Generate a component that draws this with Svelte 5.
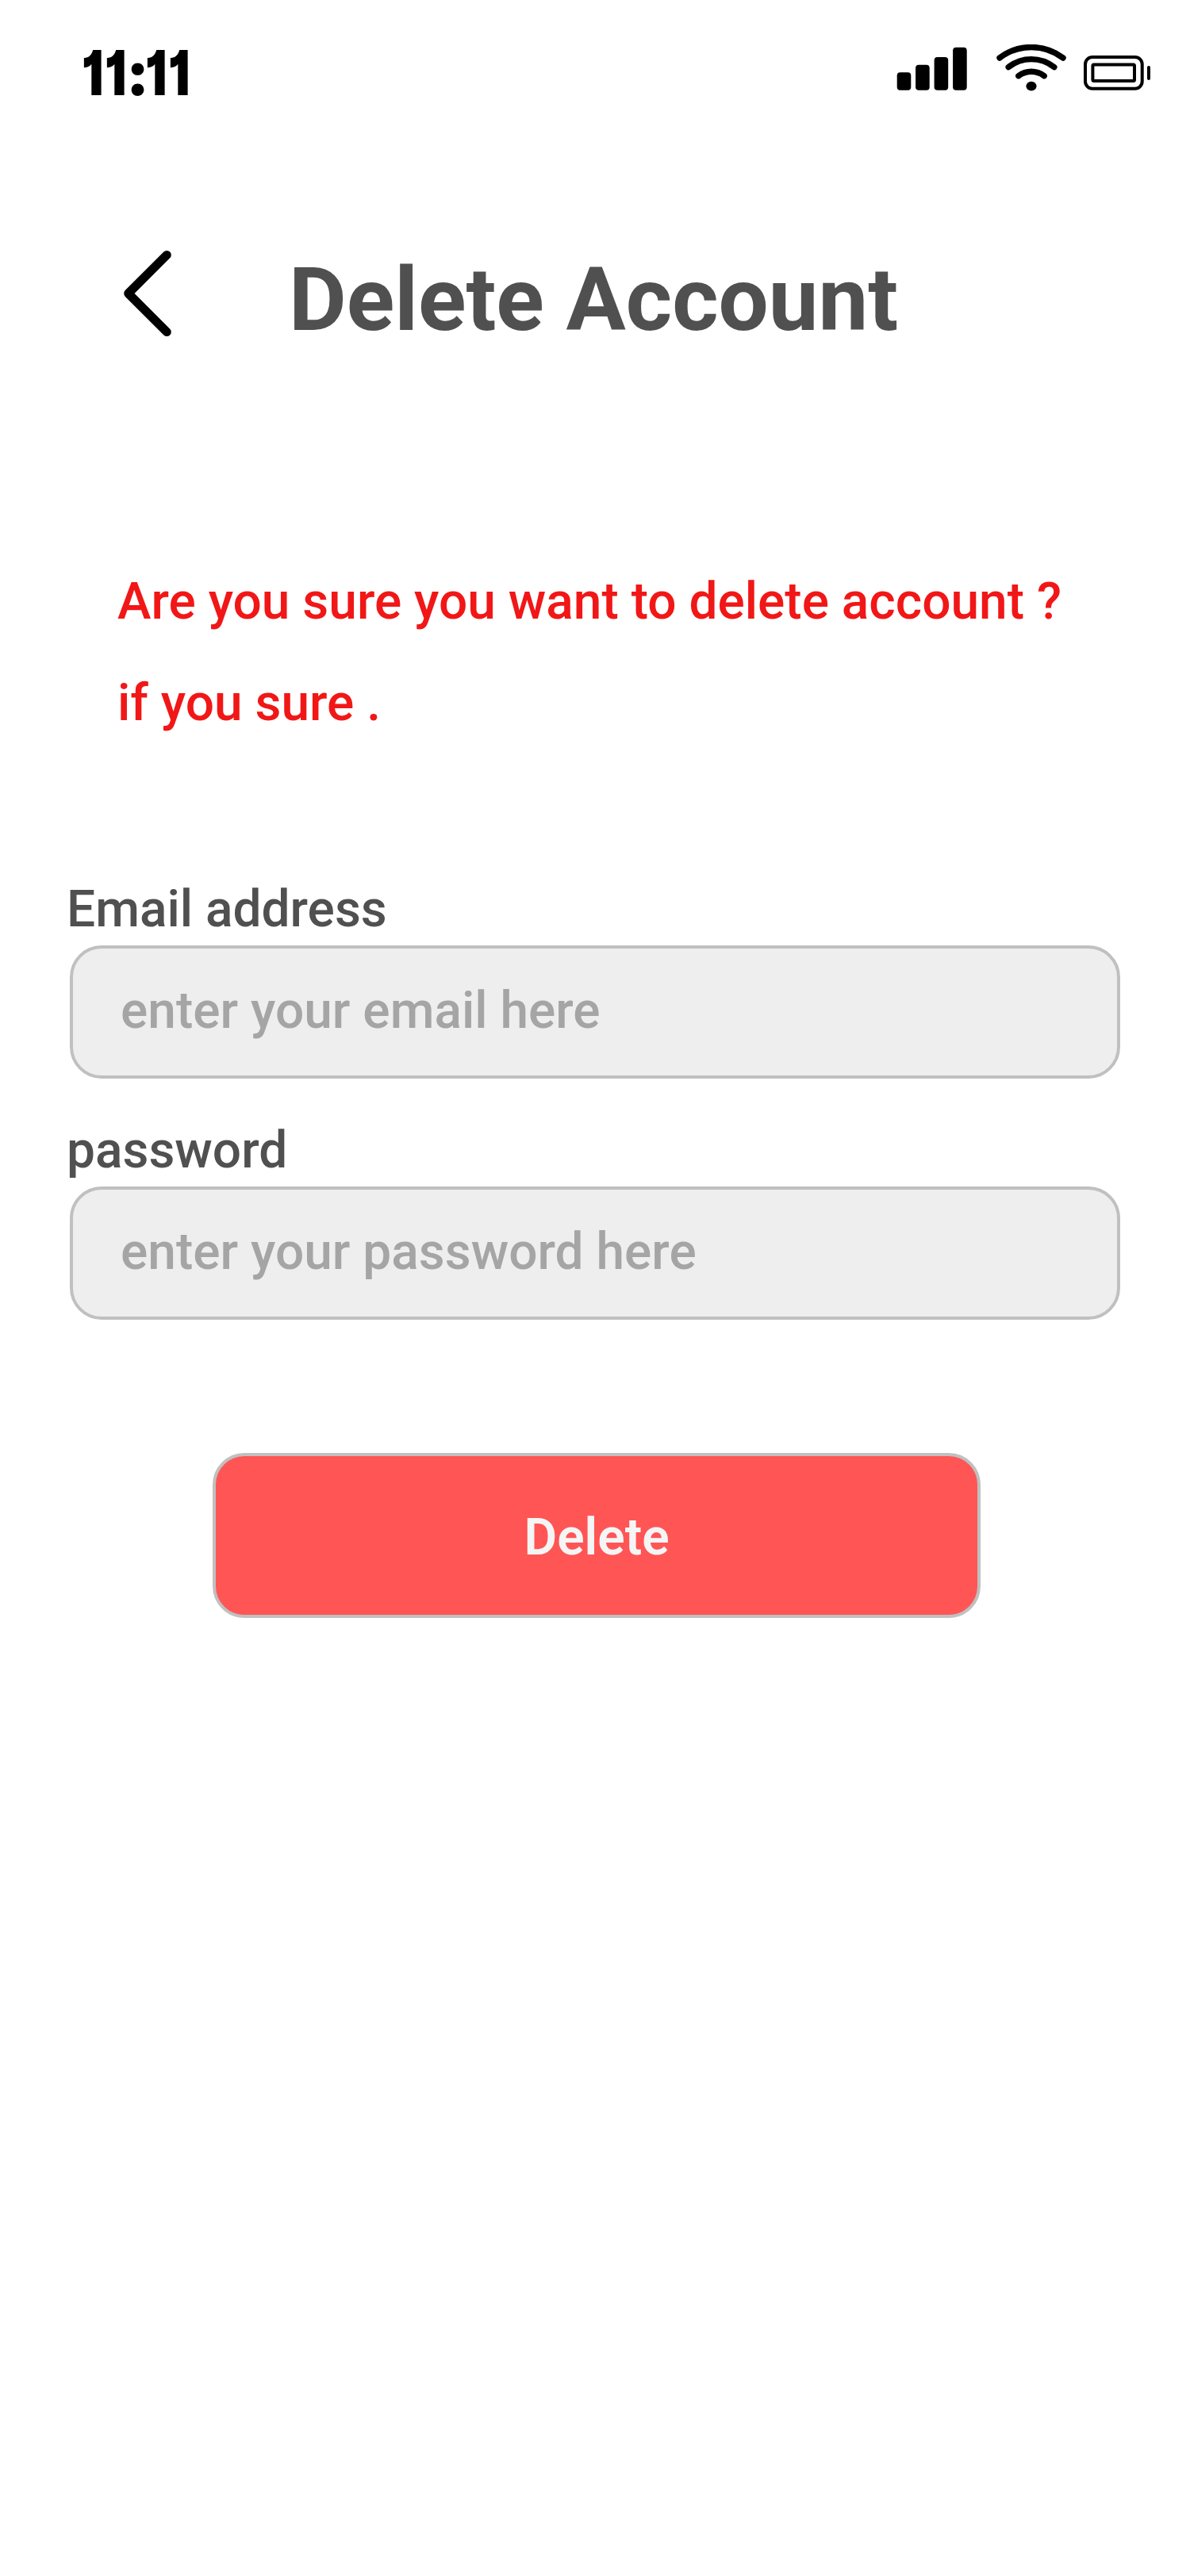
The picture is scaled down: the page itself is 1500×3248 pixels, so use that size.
<script>
  let email = $state('');
  let password = $state('');
</script>

<main class="screen">
  <div class="status">
    <div class="time">
      <span class="digits">11</span><span class="colon">:</span><span class="digits">11</span>
    </div>
    <div class="indicators">
      <svg class="signal" width="89" height="60" viewBox="0 0 89 60" aria-hidden="true">
        <rect x="0.7" y="35.3" width="17.6" height="22.4" rx="4" />
        <rect x="24.1" y="25.7" width="17.6" height="32" rx="4" />
        <rect x="47.6" y="15.9" width="17.6" height="41.8" rx="4" />
        <rect x="71.1" y="3.7" width="17.6" height="54" rx="4" />
      </svg>
      <svg class="wifi" width="90" height="60" viewBox="0 0 90 60" aria-hidden="true">
        <path d="M5 17A66 66 0 0 1 85 17" />
        <path d="M16.2 28.6A46.5 46.5 0 0 1 73.8 28.6" />
        <path d="M28.8 39.7A27 27 0 0 1 61.2 39.7" />
        <ellipse cx="45" cy="52.6" rx="6.6" ry="5.8" />
      </svg>
      <svg class="battery" width="86" height="60" viewBox="0 0 86 60" aria-hidden="true">
        <rect x="4" y="16" width="71.7" height="39.7" rx="9" />
        <rect x="13.4" y="25.6" width="52.6" height="20.5" rx="1.5" />
        <path d="M84 29V43" />
      </svg>
    </div>
  </div>

  <header class="header">
    <button class="back" aria-label="Back">
      <svg width="62" height="112" viewBox="0 0 62 112" aria-hidden="true">
        <path d="M56.3 7.4L7.7 56L56.3 104.6" />
      </svg>
    </button>
    <h1>Delete Account</h1>
  </header>

  <p class="warning">Are you sure you want to delete account ?<br />if you sure .</p>

  <form class="form" onsubmit={(event) => event.preventDefault()}>
    <div class="field">
      <label for="email">Email address</label>
      <input id="email" type="email" placeholder="enter your email here" bind:value={email} />
    </div>
    <div class="field">
      <label for="password">password</label>
      <input id="password" type="password" placeholder="enter your password here" bind:value={password} />
    </div>
    <button class="delete" type="submit">Delete</button>
  </form>
</main>

<style>
  :global(body) {
    margin: 0;
    background: #fff;
  }

  .screen {
    box-sizing: border-box;
    width: 1500px;
    min-height: 3248px;
    padding-top: 56px;
    background: #fff;
    color: #505050;
    font-family: Roboto, sans-serif;
    font-size: 64px;
    font-weight: 500;
  }

  .status {
    display: flex;
    justify-content: space-between;
    height: 72px;
    padding: 0 50px 0 103px;
    color: #000;
  }

  .time {
    display: flex;
    font-family: Inter, sans-serif;
    font-size: 78px;
    font-weight: 900;
    line-height: 72px;
    font-feature-settings: 'cv01', 'calt' 0;
  }

  .digits {
    width: 61px;
    letter-spacing: 1.75px;
    transform: scaleX(0.8);
    transform-origin: left;
  }

  .colon {
    display: flex;
    justify-content: center;
    width: 19px;
  }

  .indicators {
    display: flex;
    align-items: flex-start;
  }

  .wifi {
    margin: 0 19px 0 36px;
  }

  .wifi path,
  .battery path,
  .battery rect,
  .back path {
    fill: none;
    stroke: #000;
    stroke-linecap: round;
    stroke-linejoin: round;
  }

  .wifi path {
    stroke-width: 7.4;
  }

  .battery path,
  .battery rect {
    stroke-width: 4;
  }

  .header {
    display: flex;
    align-items: flex-start;
    gap: 148px;
    margin-top: 184px;
    padding-left: 154px;
  }

  .back {
    display: flex;
    margin-top: 2px;
    padding: 0;
    border: 0;
    background: none;
  }

  .back path {
    stroke-width: 11;
  }

  h1 {
    margin: 0;
    font-size: 112px;
    font-weight: 700;
    line-height: 132px;
  }

  .warning {
    margin: 251px 0 0 148px;
    color: #f11717;
    line-height: 128px;
  }

  .form {
    display: flex;
    flex-direction: column;
    gap: 52px;
    margin: 157px 88px 0;
  }

  .field {
    display: flex;
    flex-direction: column;
    gap: 8px;
  }

  label {
    margin-left: -4px;
    padding-top: 1px;
    line-height: 75px;
  }

  input {
    box-sizing: border-box;
    width: 100%;
    height: 168px;
    padding: 0 60px 3px;
    border: 4px solid #c0c0c0;
    border-radius: 40px;
    background: #eee;
    color: #505050;
    font: inherit;
    outline: none;
  }

  input::placeholder {
    color: #a5a5a5;
    opacity: 1;
  }

  .delete {
    box-sizing: border-box;
    align-self: center;
    width: 968px;
    height: 208px;
    margin: 116px 0 0 4px;
    padding: 5px 0 0;
    border: 4px solid #c0c0c0;
    border-radius: 40px;
    background: #f55;
    color: #f5f5f5;
    font: inherit;
    font-weight: 600;
  }
</style>
